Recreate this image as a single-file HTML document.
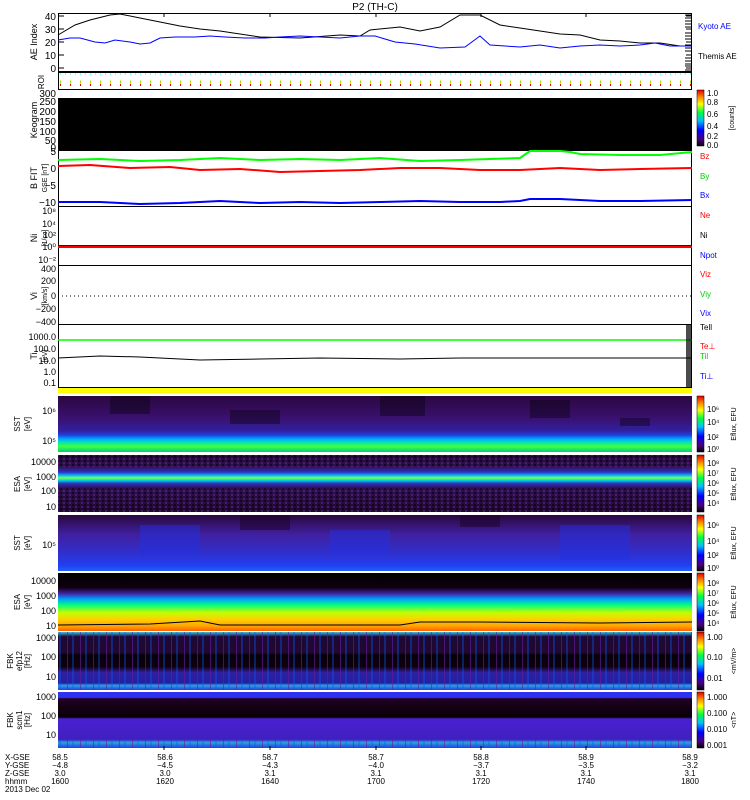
<!DOCTYPE html>
<html><head><style>
body{margin:0;background:#fff;width:750px;height:800px;overflow:hidden}
svg{display:block;font-family:"Liberation Sans",sans-serif}
</style></head><body>
<svg width="750" height="800" viewBox="0 0 750 800">
<defs>
<linearGradient id="cb1" x1="0" y1="1" x2="0" y2="0">
<stop offset="0" stop-color="#000"/><stop offset=".12" stop-color="#4a0080"/><stop offset=".28" stop-color="#0000ff"/><stop offset=".45" stop-color="#00c0ff"/><stop offset=".6" stop-color="#00ff40"/><stop offset=".75" stop-color="#ffff00"/><stop offset=".88" stop-color="#ff8000"/><stop offset="1" stop-color="#e00000"/></linearGradient>
<linearGradient id="sst1" x1="0" y1="0" x2="0" y2="1">
<stop offset="0" stop-color="#2a0840"/><stop offset=".4" stop-color="#3a1070"/><stop offset=".62" stop-color="#3020a0"/><stop offset=".7" stop-color="#2040e0"/><stop offset=".76" stop-color="#00a0ff"/><stop offset=".82" stop-color="#00e0c0"/><stop offset=".9" stop-color="#40ff40"/><stop offset="1" stop-color="#00d080"/></linearGradient>
<linearGradient id="esa1" x1="0" y1="0" x2="0" y2="1">
<stop offset="0" stop-color="#200830"/><stop offset=".2" stop-color="#301050"/><stop offset=".3" stop-color="#3030c0"/><stop offset=".36" stop-color="#00c0ff"/><stop offset=".4" stop-color="#80ff40"/><stop offset=".44" stop-color="#00e0e0"/><stop offset=".5" stop-color="#3030c0"/><stop offset=".58" stop-color="#301050"/><stop offset="1" stop-color="#200830"/></linearGradient>
<linearGradient id="sst2" x1="0" y1="0" x2="0" y2="1">
<stop offset="0" stop-color="#2a0840"/><stop offset=".35" stop-color="#4020a0"/><stop offset=".7" stop-color="#3030d0"/><stop offset=".9" stop-color="#2040f0"/><stop offset="1" stop-color="#2060ff"/></linearGradient>
<linearGradient id="esa2" x1="0" y1="0" x2="0" y2="1">
<stop offset="0" stop-color="#000"/><stop offset=".25" stop-color="#100010"/><stop offset=".35" stop-color="#4020a0"/><stop offset=".45" stop-color="#00a0ff"/><stop offset=".55" stop-color="#00ff80"/><stop offset=".68" stop-color="#c0ff00"/><stop offset=".8" stop-color="#ffd000"/><stop offset=".92" stop-color="#ffa000"/><stop offset="1" stop-color="#ff6000"/></linearGradient>
<linearGradient id="fbk1" x1="0" y1="0" x2="0" y2="1">
<stop offset="0" stop-color="#40c0e0"/><stop offset=".08" stop-color="#200838"/><stop offset=".35" stop-color="#200830"/><stop offset=".4" stop-color="#080008"/><stop offset=".6" stop-color="#100010"/><stop offset=".7" stop-color="#3020a0"/><stop offset=".88" stop-color="#2020a0"/><stop offset=".92" stop-color="#30a0e0"/><stop offset="1" stop-color="#2040e0"/></linearGradient>
<linearGradient id="fbk2" x1="0" y1="0" x2="0" y2="1">
<stop offset="0" stop-color="#3030f0"/><stop offset=".1" stop-color="#3030f0"/><stop offset=".12" stop-color="#200020"/><stop offset=".45" stop-color="#080008"/><stop offset=".48" stop-color="#4a20d0"/><stop offset=".85" stop-color="#4020c0"/><stop offset=".9" stop-color="#30a0e0"/><stop offset="1" stop-color="#2040e0"/></linearGradient>
<pattern id="noise" width="6" height="4" patternUnits="userSpaceOnUse"><rect width="6" height="4" fill="none"/><rect x="0" y="0" width="2" height="2" fill="#000" opacity=".5"/><rect x="3" y="2" width="2" height="2" fill="#6030a0" opacity=".5"/></pattern>
<pattern id="stripes" width="13" height="10" patternUnits="userSpaceOnUse"><rect x="2" width="1" height="10" fill="#6020a0" opacity=".6"/><rect x="7" width="2" height="10" fill="#0060ff" opacity=".35"/></pattern>
</defs>
<text x="375" y="10" font-size="10" text-anchor="middle">P2 (TH-C)</text>
<g stroke="#000" fill="none" stroke-width="1">
<!-- AE -->
<rect x="58.5" y="13.5" width="633" height="58"/>
<polyline points="58,35 75,25 90,20 110,15 120,14 140,18 160,22 180,26 200,29 220,31 260,37 300,38 340,35 360,36 370,30 400,27 420,31 440,27 460,15 480,15 500,25 520,28 540,31 560,34 580,35 600,40 620,41 640,43 660,43 680,46 692,46"/>
<polyline stroke="#00f" points="58,40 70,38 80,38 95,42 105,43 115,40 130,42 140,44 150,43 160,38 175,37 195,37 210,36 225,37 245,38 265,38 280,37 300,36 320,37 340,38 360,36 375,36 395,42 415,44 440,48 465,47 480,36 490,45 520,47 540,45 560,48 580,46 600,45 620,46 640,45 655,43 670,46 692,46"/>
<rect x="58.5" y="72.5" width="633" height="17"/>
<rect x="58.5" y="150.5" width="633" height="56"/>
<rect x="58.5" y="206.5" width="633" height="59"/>
<rect x="58.5" y="265.5" width="633" height="59"/>
<rect x="58.5" y="324.5" width="633" height="63"/>
</g>
<!-- AE ticks left -->
<g font-size="10" text-anchor="end">
<text x="56" y="20">40</text><text x="56" y="33">30</text><text x="56" y="46">20</text><text x="56" y="59">10</text><text x="56" y="72">0</text>
</g>
<path d="M58 16h6M58 29h6M58 42h6M58 55h6M58 68h6M686 16h6M686 29h6M686 42h6M686 55h6M686 68h6" stroke="#000"/>
<path d="M685 15h6M685 18h6M685 21h6M685 24h6M685 27h6M685 33h6M685 36h6M685 39h6M685 45h6M685 48h6M685 51h6M685 58h6M685 61h6M685 64h6M685 66h6M685 70h6" stroke="#000"/>
<text x="698" y="29" font-size="8" fill="#00f">Kyoto AE</text>
<text x="698" y="59" font-size="8">Themis AE</text>
<text transform="translate(37,42) rotate(-90)" font-size="9" text-anchor="middle">AE Index</text>
<!-- ROI -->
<line x1="60" y1="74" x2="692" y2="74" stroke="#0ff" stroke-dasharray="1,4"/>
<line x1="60" y1="82" x2="692" y2="82" stroke="#a0e000" stroke-width="3" stroke-dasharray="1,9"/>
<line x1="60" y1="85" x2="692" y2="85" stroke="#f00" stroke-width="2" stroke-dasharray="1,9"/>
<text transform="translate(44,82) rotate(-90)" font-size="8" text-anchor="middle">ROI</text>
<!-- Keogram -->
<rect x="58" y="98" width="634" height="52" fill="#000"/>
<g font-size="10" text-anchor="end"><text x="56" y="97">300</text><text x="56" y="105">250</text><text x="56" y="115">200</text><text x="56" y="125">150</text><text x="56" y="135">100</text><text x="56" y="144">50</text><text x="56" y="151">0</text></g>
<text transform="translate(37,120) rotate(-90)" font-size="9" text-anchor="middle">Keogram</text>
<rect x="697" y="90" width="7" height="56" fill="url(#cb1)" stroke="#000" stroke-width=".5"/>
<g font-size="8"><text x="707" y="96">1.0</text><text x="707" y="105">0.8</text><text x="707" y="117">0.6</text><text x="707" y="129">0.4</text><text x="707" y="139">0.2</text><text x="707" y="148">0.0</text></g>
<text transform="translate(734,118) rotate(-90)" font-size="7" text-anchor="middle">[counts]</text>
<!-- B -->
<polyline fill="none" stroke="#0f0" stroke-width="2" points="58,160 100,159 140,161 180,160 220,158 260,160 300,159 340,160 380,158 420,161 460,160 520,158 530,151 560,151 570,152 580,154 620,155 660,155 692,152"/>
<polyline fill="none" stroke="#f00" stroke-width="2" points="58,166 90,165 130,168 170,167 200,170 240,169 280,172 320,171 360,170 400,168 440,168 480,170 520,170 560,168 600,170 640,169 692,168"/>
<polyline fill="none" stroke="#00f" stroke-width="2" points="58,202 100,202 140,204 180,203 220,201 260,203 300,202 340,203 380,202 420,201 460,202 500,202 520,201 530,199 560,199 600,201 640,201 692,200"/>
<g font-size="10" text-anchor="end"><text x="56" y="155">5</text><text x="56" y="172">0</text><text x="56" y="189">−5</text><text x="56" y="206">−10</text></g>
<text transform="translate(37,178) rotate(-90)" font-size="9" text-anchor="middle">B FIT</text>
<text transform="translate(47,178) rotate(-90)" font-size="7" text-anchor="middle">GSE [nT]</text>
<g font-size="8"><text x="700" y="159" fill="#f00">Bz</text><text x="700" y="179" fill="#0c0">By</text><text x="700" y="198" fill="#00f">Bx</text></g>
<!-- Ni -->
<line x1="58" y1="246" x2="692" y2="246" stroke="#00f" stroke-width="2"/>
<line x1="58" y1="247" x2="692" y2="247" stroke="#f00" stroke-width="2"/>
<g font-size="9" text-anchor="end"><text x="56" y="214">10⁸</text><text x="56" y="227">10⁴</text><text x="56" y="238">10²</text><text x="56" y="250">10⁰</text><text x="56" y="263">10⁻²</text></g>
<text transform="translate(37,238) rotate(-90)" font-size="9" text-anchor="middle">Ni</text>
<text transform="translate(47,238) rotate(-90)" font-size="7" text-anchor="middle">[1/cc]</text>
<g font-size="8"><text x="700" y="218" fill="#f00">Ne</text><text x="700" y="238">Ni</text><text x="700" y="258" fill="#00f">Npot</text></g>
<!-- Vi -->
<line x1="58" y1="296" x2="692" y2="296" stroke="#000" stroke-dasharray="1,3"/>
<g font-size="9" text-anchor="end"><text x="56" y="272">400</text><text x="56" y="284">200</text><text x="56" y="299">0</text><text x="56" y="312">−200</text><text x="56" y="325">−400</text></g>
<text transform="translate(37,296) rotate(-90)" font-size="9" text-anchor="middle">Vi</text>
<text transform="translate(47,296) rotate(-90)" font-size="7" text-anchor="middle">[km/s]</text>
<g font-size="8"><text x="700" y="277" fill="#f00">Viz</text><text x="700" y="297" fill="#0c0">Viy</text><text x="700" y="316" fill="#00f">Vix</text></g>
<!-- Ti -->
<line x1="58" y1="340" x2="692" y2="340" stroke="#0f0" stroke-width="1.5"/>
<polyline fill="none" stroke="#000" points="58,358 100,356 140,357 200,360 260,359 320,358 400,359 460,358 520,358 580,358 640,358 692,358"/>
<rect x="686" y="325" width="6" height="62" fill="#000" opacity=".7"/>
<g font-size="9" text-anchor="end"><text x="56" y="340">1000.0</text><text x="56" y="352">100.0</text><text x="56" y="364">10.0</text><text x="56" y="375">1.0</text><text x="56" y="386">0.1</text></g>
<text transform="translate(37,356) rotate(-90)" font-size="9" text-anchor="middle">Ti</text>
<text transform="translate(47,356) rotate(-90)" font-size="7" text-anchor="middle">[eV]</text>
<g font-size="8"><text x="700" y="330">Tell</text><text x="700" y="349" fill="#f00">Te⊥</text><text x="700" y="359" fill="#0c0">Til</text><text x="700" y="379" fill="#00f">Ti⊥</text></g>
<rect x="58" y="388" width="634" height="5" fill="#ff0"/>
<!-- Spectrograms -->
<rect x="58" y="396" width="634" height="56" fill="url(#sst1)"/>
<g fill="#000" opacity=".35"><rect x="110" y="396" width="40" height="18"/><rect x="230" y="410" width="50" height="14"/><rect x="380" y="396" width="45" height="20"/><rect x="530" y="400" width="40" height="18"/><rect x="620" y="418" width="30" height="8"/></g>
<rect x="58" y="455" width="634" height="57" fill="url(#esa1)"/>
<rect x="58" y="455" width="634" height="12" fill="url(#noise)"/>
<rect x="58" y="488" width="634" height="24" fill="url(#noise)"/>
<rect x="58" y="515" width="634" height="56" fill="url(#sst2)"/>
<g fill="#2030e0" opacity=".5"><rect x="140" y="525" width="60" height="30"/><rect x="330" y="530" width="60" height="25"/><rect x="560" y="525" width="70" height="35"/></g>
<g fill="#1a0028" opacity=".5"><rect x="240" y="515" width="50" height="15"/><rect x="460" y="515" width="40" height="12"/></g>
<rect x="58" y="573" width="634" height="58" fill="url(#esa2)"/>
<polyline fill="none" stroke="#000" points="58,625 150,624 200,621 220,625 400,625 420,622 480,622 600,623 692,622"/>
<rect x="58" y="632" width="634" height="58" fill="url(#fbk1)"/>
<rect x="58" y="632" width="634" height="58" fill="url(#stripes)"/>
<rect x="58" y="692" width="634" height="56" fill="url(#fbk2)"/>
<rect x="58" y="740" width="634" height="8" fill="url(#stripes)"/>
<!-- right colorbars -->
<g stroke="#000" stroke-width=".5">
<rect x="697" y="396" width="7" height="56" fill="url(#cb1)"/>
<rect x="697" y="455" width="7" height="57" fill="url(#cb1)"/>
<rect x="697" y="515" width="7" height="56" fill="url(#cb1)"/>
<rect x="697" y="573" width="7" height="58" fill="url(#cb1)"/>
<rect x="697" y="632" width="7" height="58" fill="url(#cb1)"/>
<rect x="697" y="692" width="7" height="56" fill="url(#cb1)"/>
</g>
<g font-size="8">
<text x="707" y="412">10⁶</text><text x="707" y="425">10⁴</text><text x="707" y="440">10²</text><text x="707" y="452">10⁰</text>
<text x="707" y="466">10⁸</text><text x="707" y="476">10⁷</text><text x="707" y="486">10⁶</text><text x="707" y="496">10⁵</text><text x="707" y="506">10⁴</text>
<text x="707" y="528">10⁶</text><text x="707" y="544">10⁴</text><text x="707" y="558">10²</text><text x="707" y="571">10⁰</text>
<text x="707" y="586">10⁸</text><text x="707" y="596">10⁷</text><text x="707" y="606">10⁶</text><text x="707" y="616">10⁵</text><text x="707" y="626">10⁴</text>
<text x="707" y="640">1.00</text><text x="707" y="660">0.10</text><text x="707" y="681">0.01</text>
<text x="707" y="700">1.000</text><text x="707" y="716">0.100</text><text x="707" y="732">0.010</text><text x="707" y="748">0.001</text>
</g>
<g font-size="7">
<text transform="translate(736,424) rotate(-90)" text-anchor="middle">Eflux, EFU</text>
<text transform="translate(736,484) rotate(-90)" text-anchor="middle">Eflux, EFU</text>
<text transform="translate(736,543) rotate(-90)" text-anchor="middle">Eflux, EFU</text>
<text transform="translate(736,602) rotate(-90)" text-anchor="middle">Eflux, EFU</text>
<text transform="translate(736,661) rotate(-90)" text-anchor="middle">&lt;mV/m&gt;</text>
<text transform="translate(736,720) rotate(-90)" text-anchor="middle">&lt;nT&gt;</text>
</g>
<!-- left axes of spectrograms -->
<g font-size="9" text-anchor="end">
<text x="56" y="414">10⁶</text><text x="56" y="444">10⁵</text>
<text x="56" y="465">10000</text><text x="56" y="480">1000</text><text x="56" y="494">100</text><text x="56" y="510">10</text>
<text x="56" y="548">10⁵</text>
<text x="56" y="584">10000</text><text x="56" y="599">1000</text><text x="56" y="614">100</text><text x="56" y="629">10</text>
<text x="56" y="641">1000</text><text x="56" y="660">100</text><text x="56" y="680">10</text>
<text x="56" y="700">1000</text><text x="56" y="719">100</text><text x="56" y="738">10</text>
</g>
<g font-size="8" text-anchor="middle">
<text transform="translate(20,424) rotate(-90)">SST</text><text transform="translate(30,424) rotate(-90)">[eV]</text>
<text transform="translate(20,484) rotate(-90)">ESA</text><text transform="translate(30,484) rotate(-90)">[eV]</text>
<text transform="translate(20,543) rotate(-90)">SST</text><text transform="translate(30,543) rotate(-90)">[eV]</text>
<text transform="translate(20,602) rotate(-90)">ESA</text><text transform="translate(30,602) rotate(-90)">[eV]</text>
<text transform="translate(13,661) rotate(-90)">FBK</text><text transform="translate(22,661) rotate(-90)">efp12</text><text transform="translate(30,661) rotate(-90)">[Hz]</text>
<text transform="translate(13,720) rotate(-90)">FBK</text><text transform="translate(22,720) rotate(-90)">scm1</text><text transform="translate(30,720) rotate(-90)">[Hz]</text>
</g>
<!-- bottom labels -->
<g font-size="8">
<text x="5" y="760">X-GSE</text><text x="5" y="768">Y-GSE</text><text x="5" y="776">Z-GSE</text><text x="5" y="784">hhmm</text><text x="5" y="792">2013 Dec 02</text>
</g>
<g font-size="8" text-anchor="middle">
<text x="60" y="760">58.5</text><text x="60" y="768">−4.8</text><text x="60" y="776">3.0</text><text x="60" y="784">1600</text>
<text x="165" y="760">58.6</text><text x="165" y="768">−4.5</text><text x="165" y="776">3.0</text><text x="165" y="784">1620</text>
<text x="270" y="760">58.7</text><text x="270" y="768">−4.3</text><text x="270" y="776">3.1</text><text x="270" y="784">1640</text>
<text x="376" y="760">58.7</text><text x="376" y="768">−4.0</text><text x="376" y="776">3.1</text><text x="376" y="784">1700</text>
<text x="481" y="760">58.8</text><text x="481" y="768">−3.7</text><text x="481" y="776">3.1</text><text x="481" y="784">1720</text>
<text x="586" y="760">58.9</text><text x="586" y="768">−3.5</text><text x="586" y="776">3.1</text><text x="586" y="784">1740</text>
<text x="690" y="760">58.9</text><text x="690" y="768">−3.2</text><text x="690" y="776">3.1</text><text x="690" y="784">1800</text>
</g>
<!-- time ticks -->
<path d="M164 13v4M270 13v4M376 13v4M481 13v4M586 13v4M164 750v-4M270 750v-4M376 750v-4M481 750v-4M586 750v-4" stroke="#000"/>
</svg>
</body></html>
